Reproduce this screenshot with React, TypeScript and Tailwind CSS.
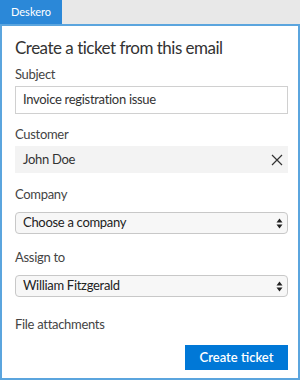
import React from 'react';

// Deskero add-in pane: create a ticket from the current email.

function Label({ children }: { children: React.ReactNode }) {
  return <div className="text-[13px] leading-[18px] tracking-[-0.3px] text-[#444]">{children}</div>;
}

function SelectBox({ value }: { value: string }) {
  return (
    <div className="mt-[9px] flex h-[22px] items-center justify-between rounded-[4px] border border-[#c8c8c8] bg-[#f7f7f7] pl-[7px] pr-[4px] text-[13px] tracking-[-0.3px] text-[#222]">
      <span>{value}</span>
      <svg width="7" height="11" viewBox="0 0 7 11" className="text-[#222]">
        <path d="M3.5 0.5 L6.5 4.5 L0.5 4.5 Z" fill="currentColor" />
        <path d="M3.5 10.5 L6.5 6.5 L0.5 6.5 Z" fill="currentColor" />
      </svg>
    </div>
  );
}

export default function App() {
  return (
    <div
      className="flex h-[380px] w-[300px] flex-col bg-white"
      style={{ fontFamily: '"Segoe UI", Lato, "Open Sans", sans-serif' }}
    >
      <div className="flex h-[24px] shrink-0 bg-[#e8e8e8]">
        <div className="flex w-[62px] items-center justify-center bg-[#2b88d8] text-[11px] text-white">
          Deskero
        </div>
      </div>
      <div className="flex flex-1 flex-col border-2 border-[#5ba5de] pl-[13px] pr-[10px]">
        <h1 className="mt-[10px] text-[17px] leading-[24px] font-normal tracking-[-0.5px] text-[#333]">
          Create a ticket from this email
        </h1>

        <div className="mt-[5px]">
          <Label>Subject</Label>
          <div className="mt-[3px] flex h-[28px] items-center border border-[#d0d0d0] bg-white px-[7px] text-[13px] tracking-[-0.3px] text-[#333]">
            Invoice registration issue
          </div>
        </div>

        <div className="mt-[11px]">
          <Label>Customer</Label>
          <div className="mt-[3px] flex h-[27px] items-center justify-between bg-[#f3f3f3] pl-[8px] pr-[5px] text-[13px] tracking-[-0.3px] text-[#333]">
            <span>John Doe</span>
            <svg width="12" height="12" viewBox="0 0 12 12">
              <path d="M1 1 L11 11 M11 1 L1 11" stroke="#333" strokeWidth="1.2" />
            </svg>
          </div>
        </div>

        <div className="mt-[12px]">
          <Label>Company</Label>
          <SelectBox value="Choose a company" />
        </div>

        <div className="mt-[14px]">
          <Label>Assign to</Label>
          <SelectBox value="William Fitzgerald" />
        </div>

        <div className="mt-[18px]">
          <Label>File attachments</Label>
        </div>

        <div className="mt-[12px] flex justify-end">
          <button className="h-[25px] w-[103px] bg-[#0078d7] text-[13px] font-semibold text-white">
            Create ticket
          </button>
        </div>
      </div>
    </div>
  );
}
